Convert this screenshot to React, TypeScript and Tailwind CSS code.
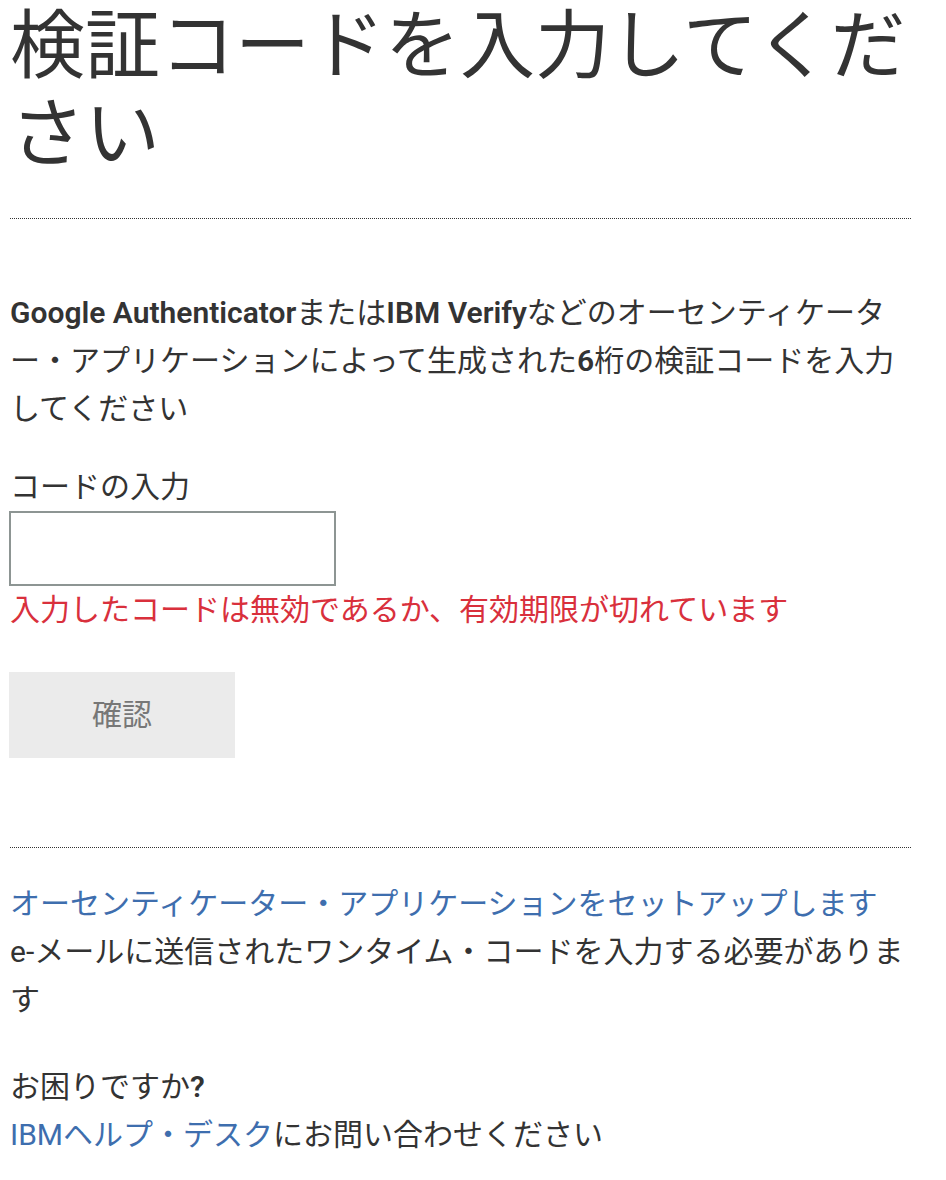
const font = "font-['Roboto','Noto_Sans_CJK_JP',sans-serif]";

export default function App() {
  return (
    <div className={`${font} bg-white text-[#333] pl-[10px] pr-[31px] pb-10`}>
      <h1 className="text-[75px] leading-[88px] font-normal pt-[2px] pb-[40px] border-b border-dotted border-[#333] mr-[4px]">
        検証コードを入力してください
      </h1>

      <div className="mt-[70px] text-[30px] leading-[48px]">
        <p>
          <b className="font-semibold">Google Authenticator</b>または<b className="font-semibold">IBM Verify</b>などのオーセンティケーター・アプリケーションによって生成された<b className="font-semibold">6</b>桁の検証コードを入力してください
        </p>

        <label className="block mt-[30px] leading-[48px]">コードの入力</label>
        <input
          type="text"
          className="block w-[327px] h-[75px] -ml-[1px] border-2 border-[#8d9593] outline-none"
        />
        <p className="text-[#d9303c]">入力したコードは無効であるか、有効期限が切れています</p>

        <button className="mt-[38px] -ml-[1px] w-[226px] h-[86px] bg-[#ebebeb] text-[#777]">確認</button>
      </div>

      <div className="mt-[89px] border-t border-dotted border-[#333] mr-[4px]" />

      <div className="mt-[32px] text-[30px] leading-[48px]">
        <a className="text-[#3e6eae] block">オーセンティケーター・アプリケーションをセットアップします</a>
        <p>e-メールに送信されたワンタイム・コードを入力する必要があります</p>
        <p className="mt-[39px]">
          お困りですか<b className="font-semibold">?</b>
        </p>
        <p>
          <a className="text-[#3e6eae]">IBMヘルプ・デスク</a>にお問い合わせください
        </p>
      </div>
    </div>
  );
}
